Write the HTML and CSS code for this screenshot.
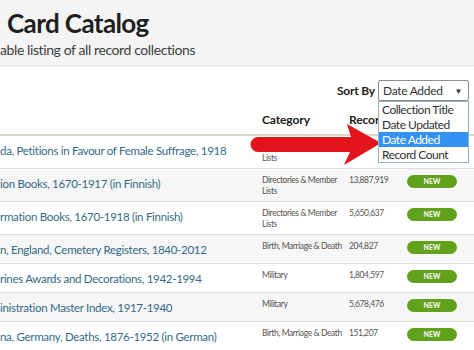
FILE: index.html
```html
<!DOCTYPE html>
<html lang="en">
<head>
    <meta charset="UTF-8">
    <meta name="viewport" content="width=device-width, initial-scale=1.0">
    <title>Card Catalog</title>
    <link rel="stylesheet" href="styles.css">
</head>
<body>

    <div class="page-header">
        <h1>Card Catalog</h1>
        <p class="subtitle">able listing of all record collections</p>
    </div>

    <div class="toolbar">
        <div class="sort-box">
            <span class="sort-label">Sort By</span>
            <div class="select-wrap">
                <div class="select">
                    <span>Date Added</span>
                    <span class="caret">&#9660;</span>
                </div>
                <ul class="dropdown">
                    <li>Collection Title</li>
                    <li>Date Updated</li>
                    <li class="selected">Date Added</li>
                    <li>Record Count</li>
                </ul>
            </div>
        </div>
    </div>

    <div class="catalog">
        <div class="row head">
            <div class="col-title"></div>
            <div class="col-cat">Category</div>
            <div class="col-count">Records</div>
            <div class="col-badge"></div>
        </div>
        <div class="row">
            <div class="col-title">da, Petitions in Favour of Female Suffrage, 1918</div>
            <div class="col-cat">Directories &amp; Member Lists</div>
            <div class="col-count"></div>
            <div class="col-badge"></div>
        </div>
        <div class="row">
            <div class="col-title">ion Books, 1670-1917 (in Finnish)</div>
            <div class="col-cat">Directories &amp; Member Lists</div>
            <div class="col-count">13,887,919</div>
            <div class="col-badge"><span class="badge">NEW</span></div>
        </div>
        <div class="row">
            <div class="col-title">rmation Books, 1670-1918 (in Finnish)</div>
            <div class="col-cat">Directories &amp; Member Lists</div>
            <div class="col-count">5,650,637</div>
            <div class="col-badge"><span class="badge">NEW</span></div>
        </div>
        <div class="row">
            <div class="col-title">n, England, Cemetery Registers, 1840-2012</div>
            <div class="col-cat">Birth, Marriage &amp; Death</div>
            <div class="col-count">204,827</div>
            <div class="col-badge"><span class="badge">NEW</span></div>
        </div>
        <div class="row">
            <div class="col-title">rines Awards and Decorations, 1942-1994</div>
            <div class="col-cat">Military</div>
            <div class="col-count">1,804,597</div>
            <div class="col-badge"><span class="badge">NEW</span></div>
        </div>
        <div class="row">
            <div class="col-title">inistration Master Index, 1917-1940</div>
            <div class="col-cat">Military</div>
            <div class="col-count">5,678,476</div>
            <div class="col-badge"><span class="badge">NEW</span></div>
        </div>
        <div class="row">
            <div class="col-title">na, Germany, Deaths, 1876-1952 (in German)</div>
            <div class="col-cat">Birth, Marriage &amp; Death</div>
            <div class="col-count">151,207</div>
            <div class="col-badge"><span class="badge">NEW</span></div>
        </div>
    </div>

    <!-- red pointer arrow drawn over the table -->
    <svg class="pointer" width="136" height="44" viewBox="0 0 136 44">
        <path d="M12 15 L105 15 L101 2 L135 21 L98 43 L104 30 L12 30 A7.5 7.5 0 0 1 12 15 Z" fill="#e2141c"/>
    </svg>

</body>
</html>
```

FILE: styles.css
```css
body {
    font-family: Lato, "Open Sans", sans-serif;
    margin: 0;
    background-color: #fff;
    color: #333;
    position: relative;
    overflow: hidden;
    height: 350px;
}
.page-header {
    background-color: #f4f4f4;
    height: 65px;
    border-bottom: 1px solid #e4e4e4;
    box-shadow: 0 1px 2px rgba(0, 0, 0, 0.06);
}
.page-header h1 {
    margin: 0;
    padding: 6px 0 0 7px;
    font-size: 26px;
    line-height: 34px;
    letter-spacing: -0.6px;
    color: #1f1f1f;
}
.subtitle {
    margin: 0;
    font-size: 14px;
    line-height: 20px;
    letter-spacing: -0.4px;
    color: #3d3d3d;
}
.toolbar {
    height: 38px;
    display: flex;
    justify-content: flex-end;
    padding: 14px 5px 0 0;
    box-sizing: border-box;
}
.sort-box {
    display: flex;
    align-items: center;
    gap: 3px;
    height: 21px;
}
.sort-label {
    font-weight: bold;
    font-size: 12px;
    letter-spacing: -0.2px;
    color: #222;
}
.select-wrap {
    position: relative;
}
.select {
    width: 91px;
    height: 21px;
    box-sizing: border-box;
    border: 1px solid #8c8c8c;
    border-radius: 2px;
    display: flex;
    justify-content: space-between;
    align-items: center;
    padding: 0 6px 0 4px;
    font-size: 12px;
    letter-spacing: -0.3px;
    color: #333;
    background-color: #fff;
}
.caret {
    font-size: 8px;
    color: #333;
}
.dropdown {
    position: absolute;
    top: 21px;
    left: 0;
    width: 91px;
    box-sizing: border-box;
    margin: 0;
    padding: 0;
    list-style: none;
    background-color: #fff;
    border: 1px solid #9aaec4;
    z-index: 3;
}
.dropdown li {
    font-size: 12px;
    line-height: 15px;
    letter-spacing: -0.5px;
    padding: 0 3px;
    color: #333;
    white-space: nowrap;
}
.dropdown li.selected {
    background-color: #3392f4;
    color: #fff;
}
.catalog {
    width: 100%;
}
.row {
    display: grid;
    grid-template-columns: 262px 87px 57px 1fr;
    padding: 6px 0 4px 0;
    border-bottom: 1px solid #dedede;
}
.row:nth-child(odd) {
    background-color: #f6f6f6;
}
.row.head {
    background-color: #fff;
    padding: 8px 0 7px 0;
    border-bottom: 2px solid #ddd6cf;
}
.row.head div {
    font-weight: bold;
    font-size: 12px;
    line-height: 15px;
    letter-spacing: -0.1px;
    color: #222;
}
.col-title {
    font-size: 11.5px;
    line-height: 18px;
    letter-spacing: -0.3px;
    color: #336a89;
    white-space: nowrap;
    overflow: hidden;
}
.col-cat, .col-count {
    font-size: 8.5px;
    line-height: 11px;
    letter-spacing: -0.4px;
    color: #555;
}
.col-badge {
    padding-left: 1px;
    line-height: 13px;
}
.badge {
    display: inline-block;
    vertical-align: top;
    width: 50px;
    height: 13px;
    line-height: 13px;
    border-radius: 7px;
    background-color: #62a11c;
    color: #fff;
    font-size: 7px;
    font-weight: bold;
    text-align: center;
}
.pointer {
    position: absolute;
    left: 246px;
    top: 122px;
    z-index: 2;
}
```
